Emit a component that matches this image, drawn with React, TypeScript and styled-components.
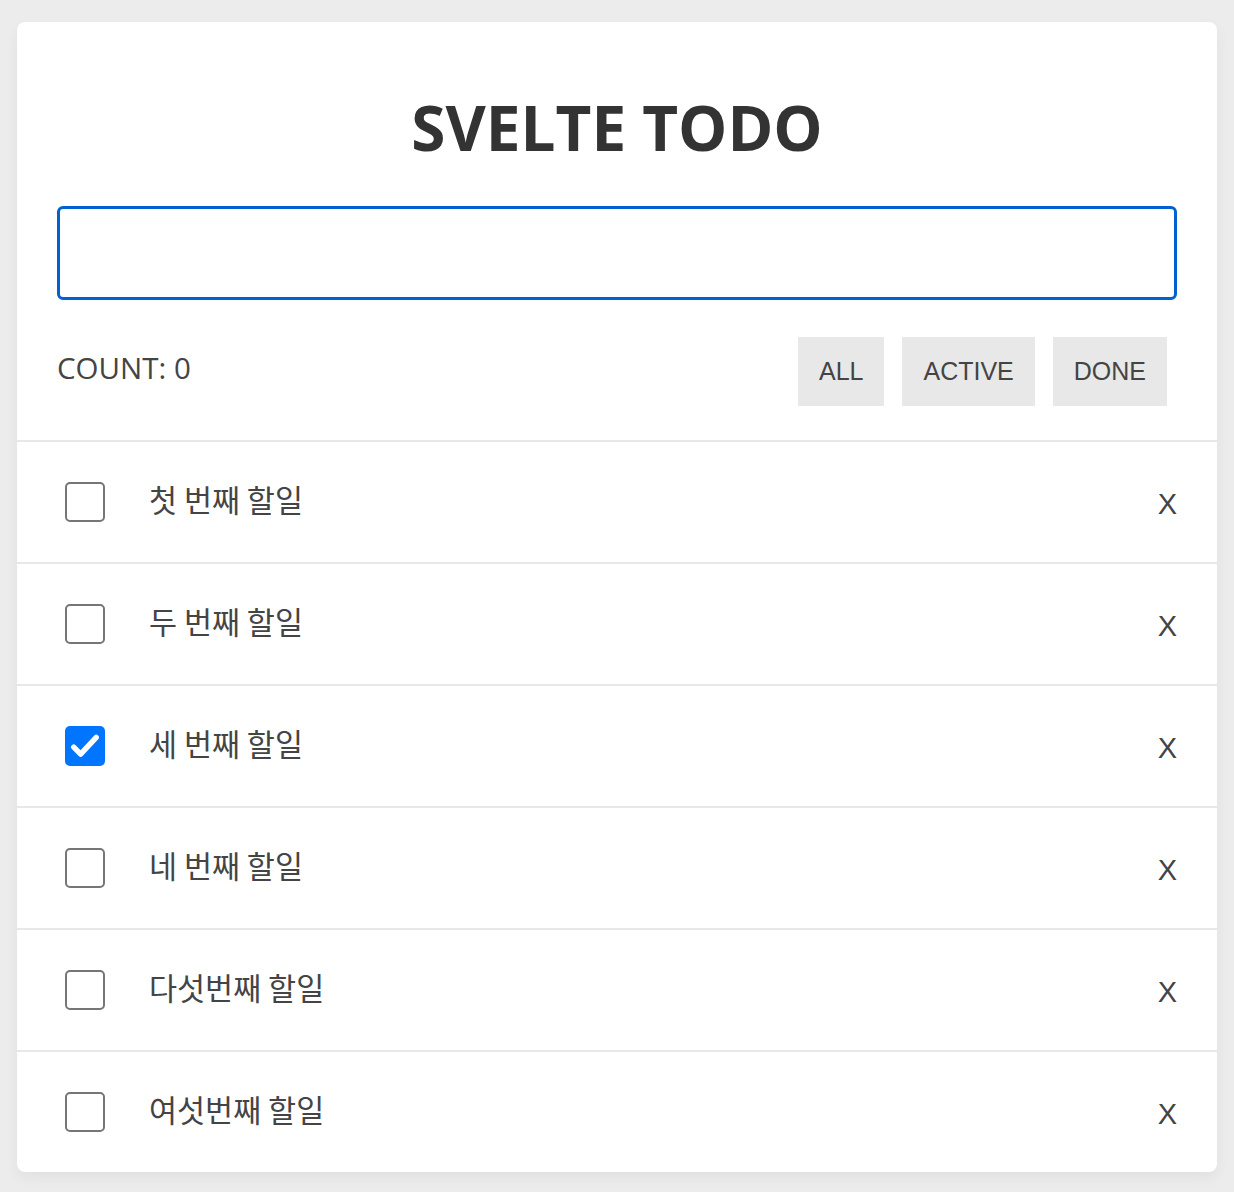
import React, { useState } from "react";
import styled, { createGlobalStyle } from "styled-components";

const GlobalStyle = createGlobalStyle`
  html, body {
    margin: 0;
    padding: 0;
    background: #ececec;
  }
  body {
    font-family: "Open Sans", "Noto Sans", "Noto Sans CJK KR", sans-serif;
    color: #444;
  }
`;

type Todo = { id: number; text: string; done: boolean };

const initialTodos: Todo[] = [
  { id: 1, text: "첫 번째 할일", done: false },
  { id: 2, text: "두 번째 할일", done: false },
  { id: 3, text: "세 번째 할일", done: true },
  { id: 4, text: "네 번째 할일", done: false },
  { id: 5, text: "다섯번째 할일", done: false },
  { id: 6, text: "여섯번째 할일", done: false },
];

export default function App() {
  const [todos, setTodos] = useState<Todo[]>(initialTodos);
  const [value, setValue] = useState("");

  const toggle = (id: number) => {
    setTodos(todos.map((t) => (t.id === id ? { ...t, done: !t.done } : t)));
  };

  const remove = (id: number) => {
    setTodos(todos.filter((t) => t.id !== id));
  };

  return (
    <Page>
      <GlobalStyle />
      <Card>
        <Header>
          <Title>SVELTE TODO</Title>
          <TodoInput value={value} onChange={(e) => setValue(e.target.value)} />
          <InfoBar>
            <Count>COUNT: 0</Count>
            <Filters>
              <FilterButton>ALL</FilterButton>
              <FilterButton>ACTIVE</FilterButton>
              <FilterButton>DONE</FilterButton>
            </Filters>
          </InfoBar>
        </Header>
        <List>
          {todos.map((todo) => (
            <Row key={todo.id}>
              <CheckBox $checked={todo.done} onClick={() => toggle(todo.id)}>
                {todo.done && (
                  <svg width="36" height="36" viewBox="0 0 24 24">
                    <path
                      d="M4.5 12.8l4.6 4.6L19.5 6.3"
                      fill="none"
                      stroke="#fff"
                      strokeWidth="3.6"
                      strokeLinecap="round"
                      strokeLinejoin="round"
                    />
                  </svg>
                )}
              </CheckBox>
              <TodoText>{todo.text}</TodoText>
              <RemoveButton onClick={() => remove(todo.id)}>X</RemoveButton>
            </Row>
          ))}
        </List>
      </Card>
    </Page>
  );
}

const Page = styled.div`
  padding: 22px 17px 20px;
`;

const Card = styled.div`
  width: 1200px;
  background: #fff;
  border-radius: 8px;
  box-shadow: 0 6px 14px rgba(0, 0, 0, 0.05);
  overflow: hidden;
`;

const Header = styled.div`
  padding: 62px 40px 34px;
`;

const Title = styled.h1`
  margin: 0;
  font-family: "Open Sans", "Noto Sans", sans-serif;
  font-weight: 700;
  font-size: 62px;
  line-height: 87px;
  text-align: center;
  color: #333;
`;

const TodoInput = styled.input`
  display: block;
  box-sizing: border-box;
  width: 100%;
  height: 94px;
  margin-top: 35px;
  border: 3px solid #0062d1;
  border-radius: 6px;
  outline: none;
  font-size: 28px;
  padding: 0 16px;
`;

const InfoBar = styled.div`
  display: flex;
  align-items: center;
  justify-content: space-between;
  margin-top: 37px;
`;

const Count = styled.div`
  font-family: "Open Sans", "Noto Sans", sans-serif;
  font-size: 29.5px;
  color: #444;
  margin-top: -8px;
`;

const Filters = styled.div`
  display: flex;
  gap: 18px;
  margin-right: 10px;
`;

const FilterButton = styled.button`
  height: 69px;
  padding: 0 21px;
  border: none;
  border-radius: 0;
  background: #e8e8e8;
  font-family: "Liberation Sans", Arial, sans-serif;
  font-size: 25px;
  color: #444;
  cursor: pointer;
`;

const List = styled.ul`
  list-style: none;
  margin: 0;
  padding: 0;
`;

const Row = styled.li`
  display: flex;
  align-items: center;
  height: 120px;
  border-top: 2px solid #e8e8e8;
  padding: 0 40px 0 48px;
`;

const CheckBox = styled.span<{ $checked: boolean }>`
  box-sizing: border-box;
  display: flex;
  align-items: center;
  justify-content: center;
  flex: none;
  width: 40px;
  height: 40px;
  border-radius: 5px;
  border: ${(p) => (p.$checked ? "none" : "2px solid #767676")};
  background: ${(p) => (p.$checked ? "#0075ff" : "#fff")};
  cursor: pointer;
`;

const TodoText = styled.span`
  flex: 1;
  margin-left: 44px;
  margin-top: -7px;
  font-family: "Noto Sans CJK KR", "Noto Sans", sans-serif;
  font-size: 30.5px;
  color: #444;
`;

const RemoveButton = styled.span`
  font-family: "Liberation Sans", Arial, sans-serif;
  font-size: 29px;
  color: #444;
  margin-top: 4px;
  cursor: pointer;
`;
